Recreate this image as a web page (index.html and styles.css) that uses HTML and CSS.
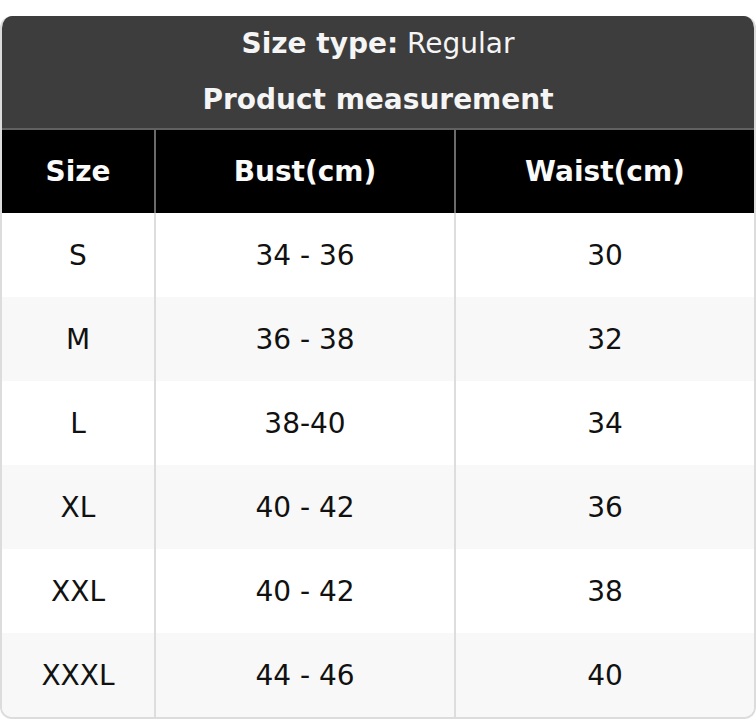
FILE: index.html
```html
<!DOCTYPE html>
<html>
<head>
<meta charset="utf-8">
<link rel="stylesheet" href="styles.css">
</head>
<body>
<div class="card">
  <div class="top">
    <div class="line"><b>Size type:</b> Regular</div>
    <div class="line"><b>Product measurement</b></div>
  </div>
  <table class="chart">
    <colgroup><col class="c1"><col class="c2"><col class="c3"></colgroup>
    <thead>
      <tr><th>Size</th><th>Bust(cm)</th><th>Waist(cm)</th></tr>
    </thead>
    <tbody>
      <tr><td>S</td><td>34 - 36</td><td>30</td></tr>
      <tr><td>M</td><td>36 - 38</td><td>32</td></tr>
      <tr><td>L</td><td>38-40</td><td>34</td></tr>
      <tr><td>XL</td><td>40 - 42</td><td>36</td></tr>
      <tr><td>XXL</td><td>40 - 42</td><td>38</td></tr>
      <tr><td>XXXL</td><td>44 - 46</td><td>40</td></tr>
    </tbody>
  </table>
</div>
</body>
</html>
```
FILE: styles.css
```css
html, body {
  margin: 0;
  padding: 0;
  background: #fff;
}
body {
  padding-top: 16px;
  font-family: "DejaVu Sans", Verdana, sans-serif;
  color: #111;
}
.card {
  width: 756px;
  box-sizing: border-box;
  border: 2px solid #dcdcdc;
  border-top: none;
  border-radius: 12px;
  overflow: hidden;
}
.top {
  background: #3d3d3d;
  color: #f5f5f5;
  border-bottom: 2px solid #616161;
  text-align: center;
  font-size: 28px;
  margin: 0 -2px;
}
.line {
  height: 56px;
  line-height: 56px;
}
.chart {
  width: 100%;
  border-collapse: collapse;
  table-layout: fixed;
  font-size: 28px;
}
.c1 { width: 153px; }
.c2 { width: 300px; }
.chart th {
  background: #000;
  color: #fafafa;
  font-weight: bold;
  height: 83px;
  padding: 0;
  border-left: 2px solid #6a6a6a;
}
.chart td {
  height: 84px;
  padding: 0;
  text-align: center;
  border-left: 2px solid #dddddd;
}
.chart th:first-child, .chart td:first-child {
  border-left: none;
}
.chart tbody tr:nth-child(even) td {
  background: #f8f8f8;
}
```
